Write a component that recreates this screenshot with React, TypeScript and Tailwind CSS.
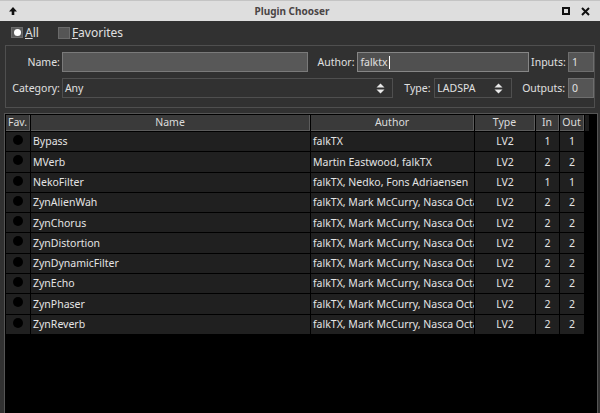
import React from 'react';

const plugins = [
  { name: 'Bypass', author: 'falkTX', type: 'LV2', ins: 1, outs: 1 },
  { name: 'MVerb', author: 'Martin Eastwood, falkTX', type: 'LV2', ins: 2, outs: 2 },
  { name: 'NekoFilter', author: 'falkTX, Nedko, Fons Adriaensen', type: 'LV2', ins: 1, outs: 1 },
  { name: 'ZynAlienWah', author: 'falkTX, Mark McCurry, Nasca Octavian Paul', type: 'LV2', ins: 2, outs: 2 },
  { name: 'ZynChorus', author: 'falkTX, Mark McCurry, Nasca Octavian Paul', type: 'LV2', ins: 2, outs: 2 },
  { name: 'ZynDistortion', author: 'falkTX, Mark McCurry, Nasca Octavian Paul', type: 'LV2', ins: 2, outs: 2 },
  { name: 'ZynDynamicFilter', author: 'falkTX, Mark McCurry, Nasca Octavian Paul', type: 'LV2', ins: 2, outs: 2 },
  { name: 'ZynEcho', author: 'falkTX, Mark McCurry, Nasca Octavian Paul', type: 'LV2', ins: 2, outs: 2 },
  { name: 'ZynPhaser', author: 'falkTX, Mark McCurry, Nasca Octavian Paul', type: 'LV2', ins: 2, outs: 2 },
  { name: 'ZynReverb', author: 'falkTX, Mark McCurry, Nasca Octavian Paul', type: 'LV2', ins: 2, outs: 2 },
];

// up/down arrows used by the combo boxes
function ComboArrows() {
  return (
    <svg width="9" height="11" viewBox="0 0 9 11" className="shrink-0">
      <path d="M0.5 4.5 L4.5 0.5 L8.5 4.5 Z" fill="#e8e8e8" />
      <path d="M0.5 6.5 L4.5 10.5 L8.5 6.5 Z" fill="#e8e8e8" />
    </svg>
  );
}

function HeaderCell({ label, w }: { label: string; w: string }) {
  return (
    <div className={`${w} h-full bg-[#3a3a3a] border-r border-b border-[#5c5c5c] flex items-center justify-center text-[#dcdcdc]`}>
      {label}
    </div>
  );
}

export default function App() {
  return (
    <div className="w-[600px] h-[413px] overflow-hidden bg-[#313131] flex flex-col font-['Noto_Sans',sans-serif] text-[10.5px] text-[#e0e0e0] leading-none">
      {/* title bar */}
      <div className="h-[21px] shrink-0 bg-[#dedede] border-t border-[#c4c4c4] flex items-center">
        <div className="w-[26px] flex justify-center">
          <svg width="10" height="10" viewBox="0 0 10 10">
            <path d="M5 1 L9 5.5 L6.3 5.5 L6.3 9 L3.7 9 L3.7 5.5 L1 5.5 Z" fill="#111" />
          </svg>
        </div>
        <div className="flex-1 text-center font-bold text-[10px] text-[#4a4545]">Plugin Chooser</div>
        <div className="w-[42px] flex items-center gap-[11px] pl-[4px]">
          <div className="w-[8px] h-[8px] border-[2px] border-[#111]" />
          <svg width="9" height="9" viewBox="0 0 9 9">
            <path d="M1 1 L8 8 M8 1 L1 8" stroke="#111" strokeWidth="2" />
          </svg>
        </div>
      </div>

      {/* filter radio row */}
      <div className="h-[23px] shrink-0 flex items-center pl-[11px] text-[12px]">
        <div className="w-[12px] h-[11px] bg-[#5a5a5a] border border-[#6c6c6c] flex items-center justify-center">
          <div className="w-[7px] h-[7px] rounded-full bg-white" />
        </div>
        <span className="ml-[2px]"><span className="underline">A</span>ll</span>
        <div className="ml-[19px] w-[12px] h-[12px] bg-[#555] border border-[#6a6a6a]" />
        <span className="ml-[2px]"><span className="underline">F</span>avorites</span>
      </div>

      {/* search group */}
      <div className="mx-[5px] mt-[1px] h-[63px] shrink-0 border border-[#4f4f4f] flex flex-col pt-[6px] gap-[6px]">
        <div className="flex items-center h-[20px]">
          <div className="w-[55px] text-right pr-[1px]">Name:</div>
          <div className="ml-[1px] w-[247px] h-[20px] bg-[#585858] border border-[#7a7a7a]" />
          <div className="ml-[9px] w-[40px]">Author:</div>
          <div className="w-[172px] h-[20px] bg-[#505050] border border-[#868686] flex items-center pl-[2px]">
            falktx<span className="ml-[1px] w-px h-[13px] bg-white" />
          </div>
          <div className="ml-[2px] w-[37px]">Inputs:</div>
          <div className="w-[26px] h-[20px] bg-[#555] border border-[#6e6e6e] flex items-center pl-[3px]">1</div>
        </div>
        <div className="flex items-center h-[20px]">
          <div className="w-[55px] text-right pr-[1px]">Category:</div>
          <div className="ml-[1px] w-[332px] h-[20px] border border-[#4f4f4f] flex items-center pl-[2px] pr-[7px]">
            <span className="flex-1">Any</span>
            <ComboArrows />
          </div>
          <div className="ml-[11px] w-[30px]">Type:</div>
          <div className="w-[78px] h-[20px] border border-[#4f4f4f] flex items-center pl-[2px] pr-[8px]">
            <span className="flex-1">LADSPA</span>
            <ComboArrows />
          </div>
          <div className="ml-[10px] w-[46px]">Outputs:</div>
          <div className="w-[26px] h-[20px] bg-[#555] border border-[#6e6e6e] flex items-center pl-[3px]">0</div>
        </div>
      </div>

      {/* plugin table */}
      <div className="mx-[4px] mr-[2px] mt-[5px] flex-1 bg-black border-l border-t border-r border-[#555] pl-px pt-px flex flex-col">
        <div className="h-[16px] flex gap-px shrink-0">
          <HeaderCell label="Fav." w="w-[24px]" />
          <HeaderCell label="Name" w="w-[279px]" />
          <HeaderCell label="Author" w="w-[163px]" />
          <HeaderCell label="Type" w="w-[60px]" />
          <HeaderCell label="In" w="w-[23px]" />
          <HeaderCell label="Out" w="w-[24px]" />
          <div className="w-[4px] h-full bg-[#1c1c1c]" />
        </div>
        <div className="flex flex-col gap-px mt-px">
          {plugins.map((p) => (
            <div key={p.name} className="h-[19.3px] flex gap-px text-[#e4e4e4]">
              <div className="w-[24px] bg-[#202020] flex justify-center pt-[3px]">
                <div className="w-[10px] h-[10px] rounded-full bg-black" />
              </div>
              <div className="w-[279px] bg-[#202020] flex items-center pl-[2px]">{p.name}</div>
              <div className="w-[163px] bg-[#202020] flex items-center pl-[2px] overflow-hidden whitespace-nowrap">{p.author}</div>
              <div className="w-[60px] bg-[#202020] flex items-center justify-center">{p.type}</div>
              <div className="w-[23px] bg-[#202020] flex items-center justify-center">{p.ins}</div>
              <div className="w-[24px] bg-[#202020] flex items-center justify-center">{p.outs}</div>
            </div>
          ))}
        </div>
      </div>
    </div>
  );
}
